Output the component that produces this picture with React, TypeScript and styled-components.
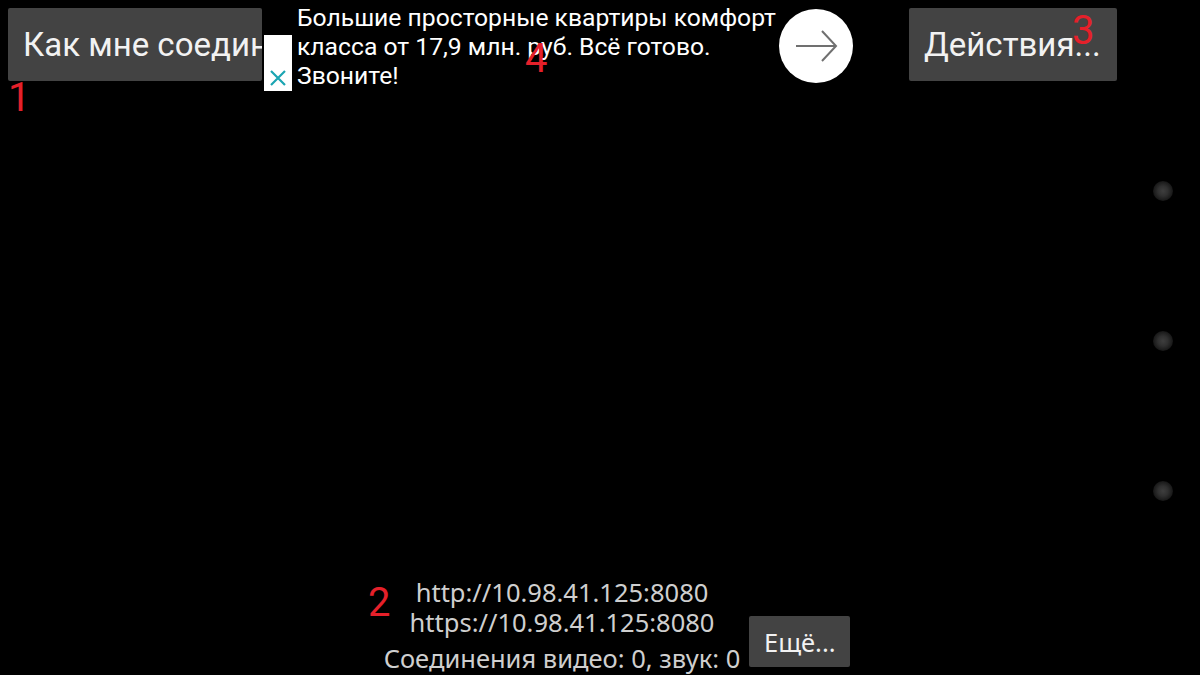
import styled, { createGlobalStyle } from 'styled-components'

const Global = createGlobalStyle`
  html, body {
    margin: 0;
    padding: 0;
    background: #000;
  }
  body {
    font-family: Roboto, "Noto Sans", sans-serif;
  }
`

const Screen = styled.div`
  position: relative;
  width: 1200px;
  height: 675px;
  background: #000;
  overflow: hidden;
  display: flex;
  flex-direction: column;
`

const TopBar = styled.div`
  display: flex;
  align-items: flex-start;
  height: 92px;
  padding: 8px 83px 0 8px;
  box-sizing: border-box;
`

const GrayButton = styled.div<{ $w: number; $h: number; $size: number; $pad: number; $font?: string }>`
  flex: none;
  width: ${p => p.$w}px;
  height: ${p => p.$h}px;
  box-sizing: border-box;
  padding-left: ${p => p.$pad}px;
  background: #434343;
  border-radius: 2px;
  box-shadow: 0 1px 1px rgba(0, 0, 0, 0.6);
  color: #f2f2f2;
  font-family: ${p => p.$font ?? 'Roboto'}, sans-serif;
  font-size: ${p => p.$size}px;
  display: flex;
  align-items: center;
  white-space: nowrap;
  overflow: hidden;
`

const Ad = styled.div`
  display: flex;
  align-items: flex-start;
  margin-left: 2px;
`

const AdClose = styled.div`
  width: 28px;
  height: 56px;
  margin-top: 27px;
  background: #fff;
  display: flex;
  align-items: flex-end;
  justify-content: center;
  padding-bottom: 4px;
  box-sizing: border-box;
`

const AdText = styled.div`
  width: 482px;
  margin: -5px 0 0 5px;
  color: #fff;
  font-size: 24.7px;
  line-height: 29px;
`

const ArrowCircle = styled.div`
  width: 74px;
  height: 74px;
  margin: 1px 0 0 0;
  border-radius: 50%;
  background: #fff;
  display: flex;
  align-items: center;
  justify-content: center;
`

const Spacer = styled.div`
  flex: 1;
`

const Canvas = styled.div`
  flex: 1;
`

const Footer = styled.div`
  display: flex;
  align-items: flex-end;
  padding: 0 0 8px 380px;
  gap: 5px;
`

const Info = styled.div`
  width: 364px;
  margin-bottom: -6px;
  text-align: center;
  color: #cfcfcf;
  font-family: "Noto Sans", sans-serif;
  font-size: 25.5px;
  line-height: 30px;
`

const InfoLast = styled.div`
  margin-top: 6px;
`

const Mark = styled.span<{ $x: number; $y: number }>`
  position: absolute;
  left: ${p => p.$x}px;
  top: ${p => p.$y}px;
  color: #e5202a;
  font-family: Roboto, sans-serif;
  font-size: 40px;
  line-height: 1;
`

const Dots = styled.div`
  position: absolute;
  right: 27px;
  top: 181px;
  display: flex;
  flex-direction: column;
  gap: 130px;
`

const Dot = styled.div`
  width: 20px;
  height: 20px;
  border-radius: 50%;
  background: radial-gradient(circle, #3e3e3e 0, #303030 35%, #171717 70%, #000 100%);
`

export default function App() {
  return (
    <Screen>
      <Global />
      <TopBar>
        <GrayButton $w={254} $h={73} $size={33} $pad={15}>
          Как мне соединиться?
        </GrayButton>
        <Ad>
          <AdClose>
            <svg width="18" height="18" viewBox="0 0 18 18">
              <path d="M2 2 L16 16 M16 2 L2 16" stroke="#1ba5b2" strokeWidth="2.2" fill="none" />
            </svg>
          </AdClose>
          <AdText>
            Большие просторные квартиры комфорт класса от 17,9 млн. руб. Всё готово. Звоните!
          </AdText>
          <ArrowCircle>
            <svg width="48" height="48" viewBox="0 0 48 48">
              <path d="M4 24 H44 M30 9 L44 24 L30 39" stroke="#707070" strokeWidth="2" fill="none" />
            </svg>
          </ArrowCircle>
        </Ad>
        <Spacer />
        <GrayButton $w={208} $h={73} $size={33} $pad={15}>
          Действия...
        </GrayButton>
      </TopBar>
      <Canvas />
      <Footer>
        <Info>
          <div>http://10.98.41.125:8080</div>
          <div>https://10.98.41.125:8080</div>
          <InfoLast>Соединения видео: 0, звук: 0</InfoLast>
        </Info>
        <GrayButton $w={101} $h={51} $size={25.5} $pad={15} $font='"Noto Sans"'>
          Ещё...
        </GrayButton>
      </Footer>
      <Dots>
        <Dot />
        <Dot />
        <Dot />
      </Dots>
      <Mark $x={8} $y={78}>1</Mark>
      <Mark $x={368} $y={583}>2</Mark>
      <Mark $x={1072} $y={11}>3</Mark>
      <Mark $x={525} $y={39}>4</Mark>
    </Screen>
  )
}
